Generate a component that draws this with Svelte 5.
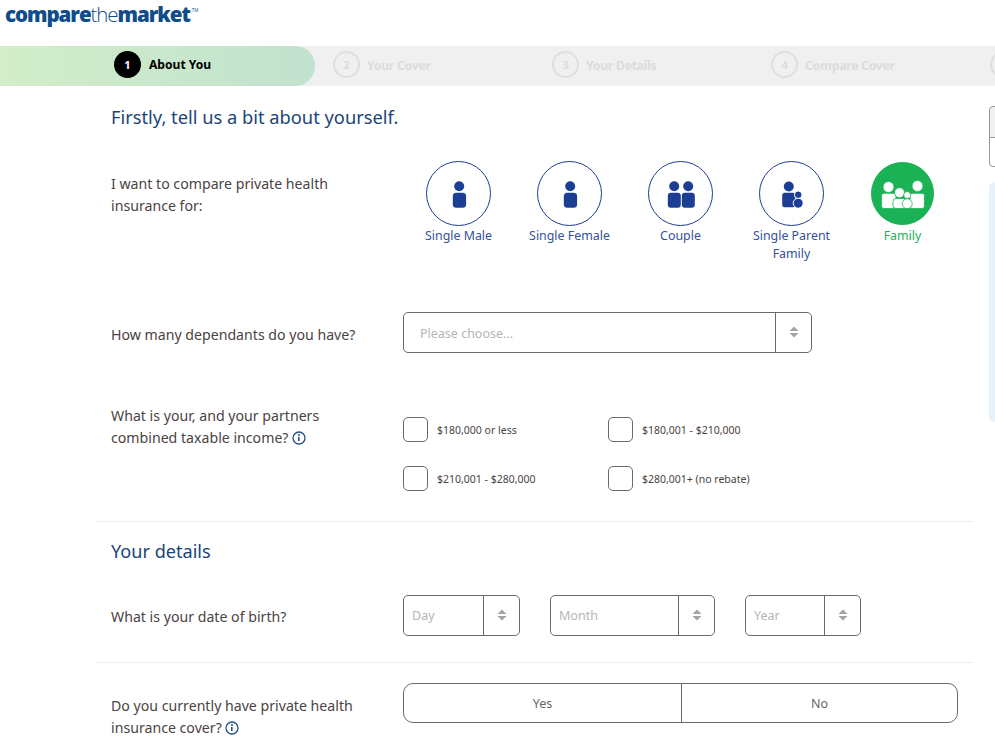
<script>
  const steps = [
    { n: 2, label: 'Your Cover' },
    { n: 3, label: 'Your Details' },
    { n: 4, label: 'Compare Cover' }
  ];
  const covers = [
    { label: 'Single Male', kind: 'one' },
    { label: 'Single Female', kind: 'one' },
    { label: 'Couple', kind: 'two' },
    { label: 'Single Parent Family', kind: 'parent' },
    { label: 'Family', kind: 'family', on: true }
  ];
  const incomes = ['$180,000 or less', '$180,001 - $210,000', '$210,001 - $280,000', '$280,001+ (no rebate)'];
  const dates = [
    { label: 'Day', cls: 'day' },
    { label: 'Month', cls: 'month' },
    { label: 'Year', cls: 'year' }
  ];
</script>

{#snippet arrows()}
  <svg class="arrows" width="10" height="12" viewBox="0 0 10 12"><path d="M5 0.5 9.5 5H.5zM.5 7h9L5 11.5z" fill="#a3a3a3"/></svg>
{/snippet}

{#snippet info()}
  <svg class="info" width="14" height="14" viewBox="0 0 14 14"><circle cx="7" cy="7" r="6" fill="none" stroke="#1f4f85" stroke-width="1.3"/><circle cx="7" cy="4" r="1" fill="#1f4f85"/><path d="M6 6h1.6v4H6z" fill="#1f4f85"/></svg>
{/snippet}

<div class="page">
  <header class="top">
    <div class="logo">compare<span>the</span>market<sup>TM</sup></div>
  </header>

  <nav class="steps">
    <div class="current">
      <span class="bubble">1</span>
      <span class="cur-label">About You</span>
    </div>
    {#each steps as s}
      <div class="step s{s.n}">
        <span class="ring">{s.n}</span>
        <span class="step-label">{s.label}</span>
      </div>
    {/each}
    <span class="ring last"></span>
  </nav>

  <div class="side-tabs"></div>
  <div class="side-panel"></div>

  <main class="form">
    <h1>Firstly, tell us a bit about yourself.</h1>

    <section class="row covers-row">
      <p class="q">I want to compare private health insurance for:</p>
      <div class="covers">
        {#each covers as c}
          <div class="cover" class:on={c.on}>
            <span class="disc">
              {#if c.kind === 'one'}
                <svg width="30" height="30" viewBox="0 0 30 30"><circle cx="15.200" cy="7.200" r="5" fill="#1c3f94"/><rect x="8.800" y="13.800" width="13.300" height="15" rx="3.500" fill="#1c3f94"/></svg>
              {:else if c.kind === 'two'}
                <svg width="30" height="30" viewBox="0 0 30 30"><circle cx="8.200" cy="7.200" r="5" fill="#1c3f94"/><circle cx="22.200" cy="7.200" r="5" fill="#1c3f94"/><rect x="1.800" y="13.800" width="13" height="15" rx="3" fill="#1c3f94"/><rect x="15.800" y="13.800" width="13" height="15" rx="3" fill="#1c3f94"/></svg>
              {:else if c.kind === 'parent'}
                <svg width="30" height="30" viewBox="0 0 30 30"><circle cx="11.800" cy="7.500" r="5" fill="#1c3f94"/><rect x="5.200" y="13.800" width="13.300" height="14.400" rx="2.500" fill="#1c3f94"/><circle cx="21.200" cy="15.800" r="3.800" fill="#1c3f94" stroke="#fff" stroke-width="1"/><circle cx="21.200" cy="24.200" r="5" fill="#1c3f94" stroke="#fff" stroke-width="1"/></svg>
              {:else}
                <svg width="44" height="38" viewBox="0 0 44 38"><g fill="#fff" stroke="#1bb255" stroke-width="0.800"><circle cx="7.500" cy="12" r="5.500"/><circle cx="36.500" cy="11" r="5.500"/><rect x="0.500" y="18.300" width="14.500" height="15.200" rx="2.500"/><rect x="29" y="18.300" width="14.500" height="15.200" rx="2.500"/><circle cx="18.500" cy="17.700" r="5"/><circle cx="26.200" cy="20" r="3.500"/><rect x="12" y="23.500" width="13" height="10" rx="3"/><circle cx="26.200" cy="28.700" r="5"/></g></svg>
              {/if}
            </span>
            <span class="cover-label">{c.label}</span>
          </div>
        {/each}
      </div>
    </section>

    <section class="row dep-row">
      <p class="q">How many dependants do you have?</p>
      <div class="select dep">
        <span class="ph">Please choose...</span>
        <span class="caret">{@render arrows()}</span>
      </div>
    </section>

    <section class="row income-row">
      <p class="q">What is your, and your partners combined taxable income? {@render info()}</p>
      <div class="incomes">
        {#each incomes as i}
          <label class="income"><span class="box"></span><span>{i}</span></label>
        {/each}
      </div>
    </section>

    <hr />

    <h2>Your details</h2>

    <section class="row dob-row">
      <p class="q">What is your date of birth?</p>
      <div class="dates">
        {#each dates as d}
          <div class="select {d.cls}">
            <span class="ph">{d.label}</span>
            <span class="caret">{@render arrows()}</span>
          </div>
        {/each}
      </div>
    </section>

    <hr />

    <section class="row cover-row">
      <p class="q">Do you currently have private health insurance cover? {@render info()}</p>
      <div class="yesno">
        <span class="yes">Yes</span>
        <span class="no">No</span>
      </div>
    </section>
  </main>
</div>

<style>
  :global(body) {
    margin: 0;
    background: #fff;
    font-family: "Noto Sans", "Open Sans", sans-serif;
    overflow: hidden;
  }
  .page {
    position: relative;
    width: 995px;
    height: 737px;
    overflow: hidden;
  }
  .top {
    height: 46px;
  }
  .logo {
    padding: 0 0 0 5px;
    font-family: "Open Sans", sans-serif;
    font-size: 20.500px;
    line-height: 28px;
    font-weight: 800;
    letter-spacing: -1.05px;
    color: #0f4c8a;
  }
  .logo span {
    font-weight: 300;
  }
  .logo sup {
    font-size: 4.500px;
    font-weight: 400;
    letter-spacing: 0;
    vertical-align: 10px;
    line-height: 0;
    margin-left: 2px;
  }
  .steps {
    position: relative;
    height: 40px;
    background: #f0f0f0;
    display: flex;
    align-items: center;
    color: #dcdcdc;
    font-size: 12.300px;
    font-weight: 700;
    letter-spacing: -0.3px;
    box-sizing: border-box;
    padding-bottom: 3px;
  }
  .step-label {
    padding-top: 2px;
  }
  .current {
    width: 315px;
    height: 40px;
    flex: none;
    box-sizing: border-box;
    padding: 0 0 3px 114px;
    margin-bottom: -3px;
    display: flex;
    align-items: center;
    gap: 8px;
    border-radius: 0 20px 20px 0;
    background: linear-gradient(90deg, #d2edc8, #c1e2cf);
    color: #000;
    font-size: 12.100px;
    letter-spacing: 0;
  }
  .bubble {
    width: 27px;
    height: 27px;
    border-radius: 50%;
    background: #000;
    color: #fff;
    display: flex;
    align-items: center;
    justify-content: center;
    font-size: 11px;
  }
  .step {
    display: flex;
    align-items: center;
    gap: 7px;
    flex: none;
  }
  .ring {
    box-sizing: border-box;
    width: 27px;
    height: 27px;
    border-radius: 50%;
    border: 2px solid #dfdfdf;
    display: flex;
    align-items: center;
    justify-content: center;
    font-size: 11px;
    flex: none;
  }
  .s2 { margin-left: 18px; width: 219px; }
  .s3 { width: 219px; }
  .s4 { width: 219px; }

  .side-tabs {
    position: absolute;
    left: 989px;
    top: 106px;
    width: 12px;
    height: 61px;
    box-sizing: border-box;
    border: 1px solid #999;
    border-radius: 4px;
    background: linear-gradient(#f0f0f0 0 30px, #999 30px 31px, #fff 31px);
  }
  .side-panel {
    position: absolute;
    left: 989px;
    top: 182px;
    width: 12px;
    height: 240px;
    border-radius: 6px;
    background: #e8f0f9;
  }

  .form {
    margin: 0 21px 0 96px;
    color: #4b4343;
  }
  h1, h2 {
    margin: 0;
    padding-left: 15px;
    font-weight: 400;
    color: #1a4578;
  }
  h1 {
    font-size: 18.300px;
    line-height: 26px;
    padding-top: 18px;
  }
  h2 {
    font-size: 18.100px;
    line-height: 26px;
    padding-top: 16px;
  }
  .row {
    display: flex;
    padding-left: 15px;
  }
  .q {
    margin: 0;
    width: 292px;
    flex: none;
    box-sizing: border-box;
    padding-right: 40px;
    font-size: 14.150px;
    line-height: 22px;
  }
  .info {
    vertical-align: -2px;
  }
  .covers-row {
    padding-top: 31px;
  }
  .covers-row .q {
    padding-top: 12px;
  }
  .covers {
    display: flex;
  }
  .cover {
    width: 111px;
    display: flex;
    flex-direction: column;
    align-items: center;
    text-align: center;
    color: #34509c;
    font-size: 12.400px;
    line-height: 18px;
  }
  .disc {
    box-sizing: border-box;
    width: 65px;
    height: 65px;
    border-radius: 50%;
    border: 1px solid #1c3f94;
    display: flex;
    align-items: center;
    justify-content: center;
    margin-bottom: 1px;
  }
  .cover-label {
    width: 90px;
  }
  .cover.on {
    color: #1bb255;
  }
  .cover.on .disc {
    background: #1bb255;
    border-color: #1bb255;
    width: 63px;
    height: 63px;
    margin: 1px 0 2px;
  }
  .dep-row {
    padding-top: 49px;
    align-items: center;
  }
  .dep-row .q {
    padding-top: 5px;
  }
  .dob-row .q {
    padding-top: 3px;
  }
  .select {
    box-sizing: border-box;
    height: 41px;
    display: flex;
    border: 1px solid #6b6b6b;
    border-radius: 5px;
    font-size: 12.500px;
    color: #b5b5b5;
  }
  .ph {
    flex: 1;
    display: flex;
    align-items: center;
    padding: 2px 0 0 16px;
    box-sizing: border-box;
  }
  .caret {
    flex: none;
    width: 35px;
    border-left: 1px solid #6b6b6b;
    display: flex;
    align-items: center;
    justify-content: center;
  }
  .arrows {
    margin-top: -2px;
  }
  .dep {
    width: 409px;
  }
  .income-row {
    padding-top: 40px;
    height: 128px;
  }
  .income-row .q {
    padding-top: 12px;
  }
  .incomes {
    display: grid;
    grid-template-columns: 205px 205px;
    align-content: start;
    row-gap: 24px;
    padding-top: 24px;
  }
  .income {
    display: flex;
    align-items: center;
    gap: 9px;
    font-size: 10.500px;
    color: #4b4343;
  }
  .box {
    box-sizing: border-box;
    width: 25px;
    height: 25px;
    border: 1px solid #6b6b6b;
    border-radius: 5px;
  }
  hr {
    border: 0;
    border-top: 1px solid #eeeeee;
    margin: 0;
  }
  .dob-row {
    padding-top: 31px;
    height: 41px;
    margin-bottom: 26px;
    align-items: center;
  }
  .dates {
    display: flex;
  }
  .dates .ph {
    padding: 0 0 0 8px;
  }
  .day { width: 117px; margin-right: 30px; }
  .month { width: 165px; margin-right: 30px; }
  .year { width: 116px; }
  .cover-row {
    padding-top: 20px;
  }
  .cover-row .q {
    padding-top: 12px;
  }
  .yesno {
    box-sizing: border-box;
    width: 555px;
    height: 40px;
    display: flex;
    border: 1px solid #6b6b6b;
    border-radius: 10px;
    font-size: 12.500px;
    color: #666;
    text-align: center;
    line-height: 40px;
  }
  .yes {
    width: 278px;
    box-sizing: border-box;
    border-right: 1px solid #6b6b6b;
  }
  .no {
    flex: 1;
  }
</style>
